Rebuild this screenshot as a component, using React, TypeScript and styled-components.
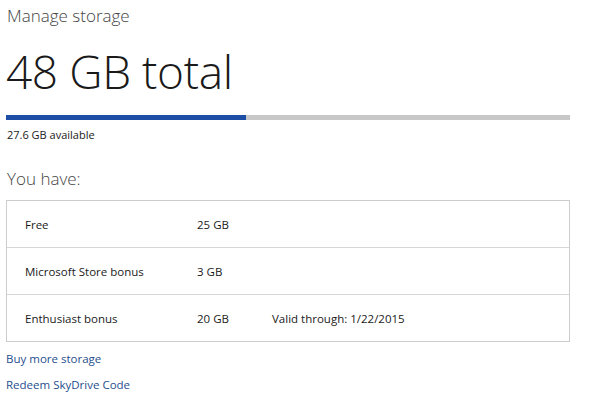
import { FC } from 'react';
import styled, { createGlobalStyle } from 'styled-components';

const GlobalStyle = createGlobalStyle`
  html, body {
    margin: 0;
    padding: 0;
    background: #ffffff;
  }
  body {
    font-family: 'Open Sans', 'Noto Sans', 'DejaVu Sans', sans-serif;
    color: #222222;
  }
`;

const Page = styled.div`
  display: flex;
  flex-direction: column;
  width: 564px;
  padding: 4px 0 0 6px;
`;

const Subtitle = styled.h2`
  margin: 0;
  font-size: 17px;
  font-weight: 300;
  line-height: 24px;
  color: #444444;
  padding-left: 1px;
`;

const Total = styled.h1`
  margin: 18px 0 0;
  font-size: 46px;
  font-weight: 300;
  line-height: 50px;
  letter-spacing: -0.4px;
  color: #1a1a1a;
`;

const Bar = styled.div`
  display: flex;
  height: 5px;
  margin-top: 19px;
  background: #c8c8c8;
`;

const BarFill = styled.div`
  height: 100%;
  background: #1c4ea6;
`;

const Available = styled.p`
  margin: 7px 0 0 1px;
  font-size: 11px;
  line-height: 16px;
  color: #1a1a1a;
`;

const SectionTitle = styled.h3`
  margin: 24px 0 0 1px;
  font-size: 17px;
  font-weight: 300;
  line-height: 24px;
  color: #444444;
`;

const Table = styled.div`
  display: flex;
  flex-direction: column;
  margin-top: 9px;
  border: 1px solid #cccccc;
`;

const Row = styled.div<{ $last?: boolean }>`
  display: grid;
  grid-template-columns: 172px 75px 1fr;
  align-items: center;
  height: 46px;
  padding-left: 18px;
  font-size: 11.5px;
  color: #1a1a1a;
  border-bottom: ${({ $last }) => ($last ? 'none' : '1px solid #d6d6d6')};
`;

const Links = styled.div`
  display: flex;
  flex-direction: column;
  gap: 9px;
  margin-top: 8px;
`;

const Link = styled.a`
  font-size: 11.5px;
  line-height: 17px;
  color: #1f4f8e;
  text-decoration: none;
  cursor: pointer;
`;

type Bonus = {
  name: string;
  size: string;
  note?: string;
};

const bonuses: Bonus[] = [
  { name: 'Free', size: '25 GB' },
  { name: 'Microsoft Store bonus', size: '3 GB' },
  { name: 'Enthusiast bonus', size: '20 GB', note: 'Valid through: 1/22/2015' },
];

const used = 20.4;
const total = 48;

const App: FC = () => (
  <>
    <GlobalStyle />
    <Page>
      <Subtitle>Manage storage</Subtitle>
      <Total>48 GB total</Total>
      <Bar>
        <BarFill style={{ width: `${(used / total) * 100}%` }} />
      </Bar>
      <Available>27.6 GB available</Available>
      <SectionTitle>You have:</SectionTitle>
      <Table>
        {bonuses.map((b, i) => (
          <Row key={b.name} $last={i === bonuses.length - 1}>
            <span>{b.name}</span>
            <span>{b.size}</span>
            <span>{b.note}</span>
          </Row>
        ))}
      </Table>
      <Links>
        <Link>Buy more storage</Link>
        <Link>Redeem SkyDrive Code</Link>
      </Links>
    </Page>
  </>
);

export default App;
